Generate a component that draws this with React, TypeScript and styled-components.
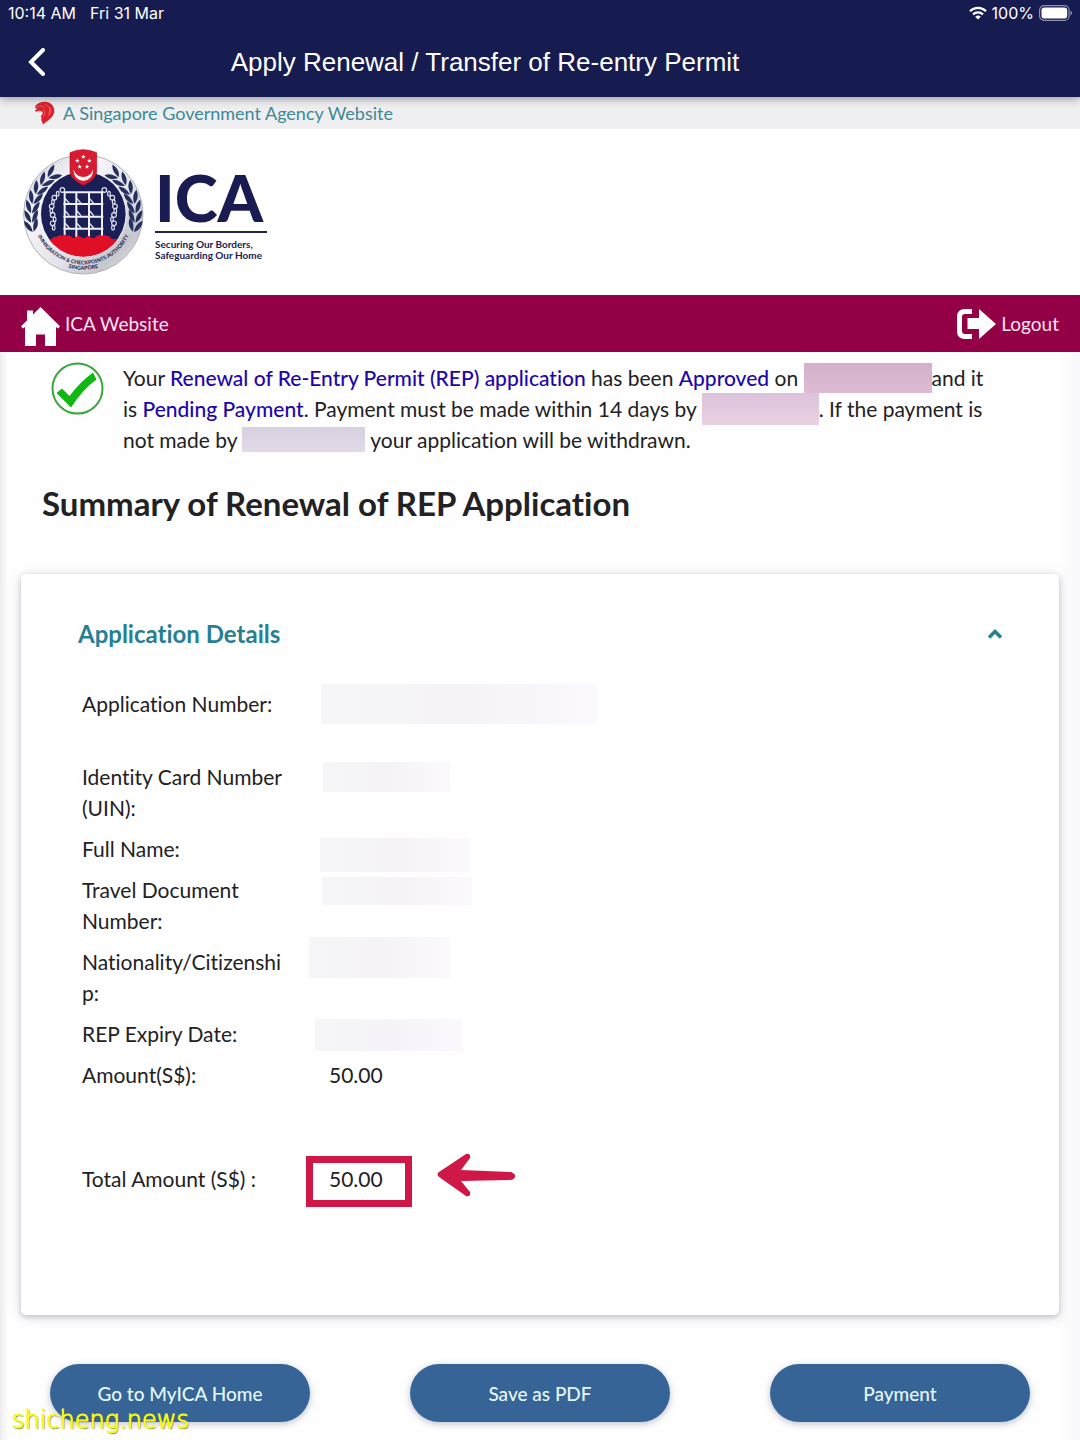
import React, { useState } from "react";
import styled, { createGlobalStyle } from "styled-components";

const sans = `Lato, "Open Sans", sans-serif`;

const GlobalStyle = createGlobalStyle`
  *, *::before, *::after { box-sizing: border-box; }
  body {
    margin: 0;
    background: #fff;
    color: #222124;
    font: 21px/31px ${sans};
    font-variant-ligatures: none;
  }
  h1, h2, h3, p, dl, dd { margin: 0; }
  a { color: inherit; text-decoration: none; }
  svg { display: block; flex: none; }
  button { font: inherit; border: 0; padding: 0; background: none; color: inherit; cursor: pointer; }
`;

const Page = styled.div`
  position: relative;
  min-height: 100vh;
  display: flex;
  flex-direction: column;
`;

const TopBar = styled.header`
  position: relative;
  background: #171c50;
  color: #fff;
  box-shadow: 0 2px 8px rgba(40, 50, 60, 0.45);
`;

const StatusBar = styled.div`
  display: flex;
  justify-content: space-between;
  padding: 0 8px;
  font: 16px/26px Inter, sans-serif;
`;

const StatusGroup = styled.div<{ $gap: number }>`
  display: flex;
  align-items: center;
  gap: ${(p) => p.$gap}px;
`;

const TitleBar = styled.div`
  display: flex;
  align-items: center;
  height: 71px;
  padding: 0 158px 0 24px;
`;

const BackButton = styled.button`
  display: grid;
  place-items: center;
  width: 24px;
  height: 40px;
`;

const Title = styled.h1`
  flex: 1;
  text-align: center;
  font: 400 26px/32px "Liberation Sans", Arial, sans-serif;
`;

const AgencyStrip = styled.div`
  display: flex;
  align-items: center;
  gap: 8px;
  height: 32px;
  padding: 0 34px;
  background: #efeef0;
  color: #3c8995;
  font-size: 18px;
`;

const Brand = styled.div`
  display: flex;
  align-items: center;
  gap: 10px;
  height: 166px;
  padding: 0 21px;
  color: #1a1b51;
`;

const BrandText = styled.div`
  min-width: 112px;
  padding-top: 4px;
`;

const BrandName = styled.div`
  padding-bottom: 5px;
  font-size: 65px;
  line-height: 58px;
  font-weight: 900;
  border-bottom: 2px solid #22264f;
`;

const Tagline = styled.p`
  padding-top: 6px;
  font-size: 10px;
  line-height: 11px;
  font-weight: 700;
`;

const NavBar = styled.nav`
  display: flex;
  justify-content: space-between;
  align-items: center;
  height: 57px;
  padding: 0 21px;
  background: #930046;
  color: #fbe3f2;
  font-size: 19px;
`;

const NavLink = styled.a`
  display: flex;
  align-items: center;
  gap: 5px;
`;

const Main = styled.main`
  flex: 1;
  padding: 10px 21px 18px;
  background:
    linear-gradient(90deg, #ededf0, rgba(255, 255, 255, 0) 8px),
    linear-gradient(270deg, #f9f8fb, rgba(255, 255, 255, 0) 20px),
    #fefefe;
`;

const Notice = styled.section`
  display: flex;
  align-items: flex-start;
  gap: 19px;
  padding: 0 64px 0 30px;
`;

const Key = styled.span`
  color: #1c05ad;
  font-weight: 500;
`;

const InlineMask = styled.span<{ $w: number; $h: number; $tone: string }>`
  display: inline-block;
  vertical-align: middle;
  width: ${(p) => p.$w}px;
  height: ${(p) => p.$h}px;
  margin: -7px 0 -1px;
  background: ${(p) => p.$tone};
`;

const Heading = styled.h2`
  padding: 27px 21px 0;
  font-size: 33px;
  line-height: 42px;
  font-weight: 700;
`;

const Card = styled.section`
  margin-top: 50px;
  min-height: 741px;
  padding: 44px 56px 60px 57px;
  border-radius: 5px;
  background: #fff;
  box-shadow: 0 2px 6px rgba(40, 40, 60, 0.28), 0 2px 18px rgba(60, 40, 80, 0.08);
`;

const CardHeader = styled.header`
  display: flex;
  justify-content: space-between;
  align-items: center;
  color: #267f95;
`;

const CardTitle = styled.h3`
  font-size: 24px;
  line-height: 31px;
  font-weight: 700;
`;

const Toggle = styled.button`
  display: grid;
  place-items: center;
  width: 16px;
  height: 31px;
`;

const Details = styled.dl`
  display: grid;
  gap: 10px;
  padding: 39px 4px 0;
`;

const DetailRow = styled.div<{ $tall?: boolean }>`
  display: grid;
  grid-template-columns: 206px 1fr;
  column-gap: 41px;
  min-height: ${(p) => (p.$tall ? 63 : 31)}px;
`;

const Label = styled.dt`
  overflow-wrap: anywhere;
`;

const Value = styled.dd`
  position: relative;
`;

const Mask = styled.span<{ $x: number; $y: number; $w: number; $h: number }>`
  position: absolute;
  left: ${(p) => p.$x}px;
  top: ${(p) => p.$y}px;
  width: ${(p) => p.$w}px;
  height: ${(p) => p.$h}px;
  background: linear-gradient(90deg, #f6f6f8, #f5f3f7 50%, #fbf9fd);
`;

const Highlight = styled.span`
  position: absolute;
  left: -23px;
  top: -7px;
  width: 106px;
  height: 51px;
  border: 7px solid #cf1848;
`;

const Arrow = styled.svg`
  position: absolute;
  left: 108px;
  top: -10px;
`;

const Total = styled(Details)`
  padding-top: 73px;
`;

const Actions = styled.div`
  display: grid;
  grid-template-columns: repeat(3, 1fr);
  justify-items: center;
  margin: 49px -21px 0;
`;

const ActionButton = styled.button`
  width: 72%;
  height: 58px;
  border-radius: 29px;
  background: #366497;
  color: #e4f8ff;
  font-size: 19px;
  font-weight: 500;
  box-shadow: 0 2px 7px rgba(50, 60, 110, 0.3);
`;

const Watermark = styled.div`
  position: absolute;
  left: 12px;
  bottom: 4px;
  color: #f8f81c;
  font: 200 24px/32px "DejaVu Sans", sans-serif;
  -webkit-text-stroke: 1px #f8f81c;
  text-shadow: 1px 1px 1px #55601f;
`;

function Wifi() {
  return (
    <svg width="18" height="14" viewBox="0 0 18 14" fill="none" stroke="#fff" strokeWidth="2.2">
      <path d="M1 5.2a11.4 11.4 0 0 1 16 0" />
      <path d="M4 8.4a7.2 7.2 0 0 1 10 0" />
      <path d="M9 13.6 6.2 10.8a4 4 0 0 1 5.6 0Z" fill="#fff" stroke="none" />
    </svg>
  );
}

function Battery() {
  return (
    <svg width="33" height="16" viewBox="0 0 33 16">
      <rect x=".6" y=".6" width="29.5" height="14.8" rx="4.5" fill="none" stroke="#8e91ad" strokeWidth="1.2" />
      <rect x="2.5" y="2.5" width="25.7" height="11" rx="2.8" fill="#fff" />
      <path d="M31.5 5.5v5c2-.8 2-4.2 0-5Z" fill="#8e91ad" />
    </svg>
  );
}

function Lion() {
  return (
    <svg width="21" height="24" viewBox="0 0 63 72">
      <path
        fill="#dc1f2a"
        d="M4 14C14 3 34-1 46 5c12 6 17 19 14 31-3 11-11 17-19 23-5 3-9 7-13 11-3-3-4-6-4-9-3-3-3-6-1-9l-3-7c5-3 7-8 5-13-5-2-9-3-12-2l-8 2-2-5 8-4-8-2 2-5Z"
      />
      <path
        fill="none"
        stroke="#f4989c"
        strokeWidth="1.5"
        d="M8 17c10-3 18-2 25 3M34 10c13 6 17 18 8 30M48 18c6 10 3 20-6 28M26 24c8 6 8 16 1 24"
      />
    </svg>
  );
}

const chain = [
  [157, 150], [143, 161], [133, 173], [129, 186], [125, 199], [124, 212],
  [128, 225], [134, 238], [128, 250], [131, 263],
];
const leaves = [
  [66, 260, -12], [64, 232, -2], [66, 204, 8], [73, 176, 18], [86, 149, 30],
  [104, 124, 41], [127, 103, 53],
];
const stars = [[220, 50], [202, 62], [238, 62], [209, 80], [231, 80]];

function Laurel() {
  return (
    <g fill="#25305f">
      {leaves.map(([x, y, a]) => (
        <g key={y} transform={`translate(${x} ${y}) rotate(${a})`}>
          <path d="M-1 16C-16 8-21-5-20-22-9-15-1-6-1 16Z" />
          <path d="M2 16C2-4 8-15 20-22 22-6 17 7 2 16Z" />
        </g>
      ))}
    </g>
  );
}

function Emblem() {
  return (
    <svg width="124" height="127" viewBox="33 27 372 381" role="img" aria-label="Immigration & Checkpoints Authority emblem">
      <defs>
        <linearGradient id="silver" x1="0" y1="0" x2="1" y2="1">
          <stop offset="0" stopColor="#c9c9d0" />
          <stop offset=".3" stopColor="#f7f7fa" />
          <stop offset=".6" stopColor="#e3e3e8" />
          <stop offset=".8" stopColor="#c6c6cd" />
          <stop offset="1" stopColor="#ececf0" />
        </linearGradient>
        <clipPath id="disc"><circle cx="220" cy="222" r="128" /></clipPath>
        <path id="arcOuter" d="M84 288A151 151 0 0 0 356 288" />
        <path id="arcInner" d="M120 356A167 167 0 0 0 320 356" />
      </defs>
      <circle cx="220" cy="223" r="179" fill="url(#silver)" stroke="#b3b3bb" strokeWidth="3" />
      <Laurel />
      <g transform="translate(440 0) scale(-1 1)"><Laurel /></g>
      <circle cx="220" cy="222" r="130" fill="#f3f3f7" />
      <circle cx="220" cy="222" r="127" fill="#1a1f55" />
      <g fill="none" stroke="#eef0f6" strokeWidth="6">
        <path d="M160 157H280M164 157V300M199 157V300M237 157V300M276 157V300M160 192H280M160 230H280M160 266H280" />
        <path strokeWidth="4" d="M166 176l12 14M201 176l12 14M239 176l12 14M166 213l12 14M201 213l12 14M239 213l12 14M166 250l12 14M201 250l12 14M239 250l12 14" />
      </g>
      <g fill="none" stroke="#dfe3f0" strokeWidth="3.5">
        {chain.map(([x, y], i) => (
          <g key={y}>
            <ellipse cx={x} cy={y} rx={i % 2 ? 4 : 7} ry="7" />
            <ellipse cx={440 - x} cy={y} rx={i % 2 ? 4 : 7} ry="7" />
          </g>
        ))}
      </g>
      <path
        clipPath="url(#disc)"
        fill="#e00f25"
        d="M85 299 125 298q5-10 14-7 8-8 16-3 9-8 17 0 8-4 13 3 6 8 12 0 8-5 16-1 8 9 16 1 7-7 14 1 8 7 14-1 9-10 18-4 9-5 16 1 9-2 13 9l60 1V360H85Z"
      />
      <path fill="#d91a30" stroke="#a80f25" strokeWidth="2" d="M180 38q38-18 80 0V92c0 22-18 32-40 44-22-12-40-22-40-44Z" />
      {stars.map(([x, y]) => (
        <path key={`${x}-${y}`} transform={`translate(${x} ${y})`} fill="#fff" d="M0-7 2-2 7-2 3 1 4 6 0 3-4 6-3 1-7-2-2-2Z" />
      ))}
      <path fill="#fff" d="M191 88c5 18 17 23 29 23s24-5 29-23c1 21-12 34-29 34s-30-13-29-34Z" />
      <g fill="#2b2f55" fontFamily="Lato, sans-serif" fontWeight="900" fontSize="16" textAnchor="middle">
        <text><textPath href="#arcOuter" startOffset="50%">IMMIGRATION &amp; CHECKPOINTS AUTHORITY</textPath></text>
        <text><textPath href="#arcInner" startOffset="50%">SINGAPORE</textPath></text>
      </g>
    </svg>
  );
}

function HomeIcon() {
  return (
    <svg width="39" height="45" viewBox="0 -6 39 45" fill="#fff">
      <path d="M19.5 0 39 19.3 37 21.5 35 20V39H24V27.5H15V39H4V20L2 21.5 0 19.3 6 13.5V3.5H12V7.5Z" />
    </svg>
  );
}

function LogoutIcon() {
  return (
    <svg width="39" height="30" viewBox="0 0 39 30">
      <path d="M15 2.5H8Q2.5 2.5 2.5 8V22Q2.5 27.5 8 27.5H15" fill="none" stroke="#fff" strokeWidth="5" />
      <path d="M10.5 9H22V0L39 15 22 30V20H10.5Z" fill="#fff" />
    </svg>
  );
}

function Approved() {
  return (
    <svg width="53" height="53" viewBox="0 0 53 53">
      <circle cx="26.5" cy="26.5" r="25" fill="#fff" stroke="#39a83c" strokeWidth="2" />
      <path d="M5.5 31 11 26.5 18.5 34Q29 20 42 10.5L45.5 17.5Q32 27 20 45.5Z" fill="#13b713" />
    </svg>
  );
}

type Detail = { label: string; mask?: [number, number, number, number]; value?: string; tall?: boolean };

const details: Detail[] = [
  { label: "Application Number:", mask: [-8, -4, 276, 40], tall: true },
  { label: "Identity Card Number (UIN):", mask: [-6, 1, 128, 30] },
  { label: "Full Name:", mask: [-9, 5, 150, 34] },
  { label: "Travel Document Number:", mask: [-7, 3, 150, 28] },
  { label: "Nationality/Citizenship:", mask: [-20, -9, 141, 41] },
  { label: "REP Expiry Date:", mask: [-14, 1, 147, 32] },
  { label: "Amount(S$):", value: "50.00" },
];

export default function App() {
  const [open, setOpen] = useState(true);
  return (
    <>
      <GlobalStyle />
      <Page>
        <TopBar>
          <StatusBar>
            <StatusGroup $gap={14}><span>10:14 AM</span><span>Fri 31 Mar</span></StatusGroup>
            <StatusGroup $gap={5}><Wifi /><span>100%</span><Battery /></StatusGroup>
          </StatusBar>
          <TitleBar>
            <BackButton aria-label="Back">
              <svg width="18" height="28" viewBox="0 0 18 28" fill="none" stroke="#fff" strokeWidth="4">
                <path d="M16 2 4 14 16 26" strokeLinecap="round" />
              </svg>
            </BackButton>
            <Title>Apply Renewal / Transfer of Re-entry Permit</Title>
          </TitleBar>
        </TopBar>
        <AgencyStrip>
          <Lion />
          <a href="#agency">A Singapore Government Agency Website</a>
        </AgencyStrip>
        <Brand>
          <Emblem />
          <BrandText>
            <BrandName>ICA</BrandName>
            <Tagline>Securing Our Borders,<br />Safeguarding Our Home</Tagline>
          </BrandText>
        </Brand>
        <NavBar>
          <NavLink href="#home"><HomeIcon />ICA Website</NavLink>
          <NavLink href="#logout"><LogoutIcon />Logout</NavLink>
        </NavBar>
        <Main>
          <Notice>
            <Approved />
            <p>
              Your <Key>Renewal of Re-Entry Permit (REP) application</Key> has been <Key>Approved</Key> on{" "}
              <InlineMask $w={128} $h={30} $tone="linear-gradient(#d3b0cb, #dfbcd4)" />
              and it is <Key>Pending Payment</Key>. Payment must be made within 14 days by{" "}
              <InlineMask $w={117} $h={32} $tone="linear-gradient(#dcc2dc, #ead2e2)" />
              . If the payment is not made by{" "}
              <InlineMask $w={123} $h={25} $tone="linear-gradient(#d6d0df, #e3dae8)" /> your application will be
              withdrawn.
            </p>
          </Notice>
          <Heading>Summary of Renewal of REP Application</Heading>
          <Card>
            <CardHeader>
              <CardTitle>Application Details</CardTitle>
              <Toggle aria-label="Toggle application details" aria-expanded={open} onClick={() => setOpen(!open)}>
                <svg width="16" height="10" viewBox="0 0 16 10" fill="none" stroke="#267f95" strokeWidth="3.5">
                  <path d={open ? "M2 8.5 8 2.5 14 8.5" : "M2 1.5 8 7.5 14 1.5"} />
                </svg>
              </Toggle>
            </CardHeader>
            {open && (
              <>
                <Details>
                  {details.map(({ label, mask, value, tall }) => (
                    <DetailRow key={label} $tall={tall}>
                      <Label>{label}</Label>
                      <Value>
                        {value}
                        {mask && <Mask $x={mask[0]} $y={mask[1]} $w={mask[2]} $h={mask[3]} />}
                      </Value>
                    </DetailRow>
                  ))}
                </Details>
                <Total>
                  <DetailRow>
                    <Label>Total Amount (S$) :</Label>
                    <Value>
                      50.00
                      <Highlight />
                      <Arrow width="79" height="44" viewBox="0 0 79 44">
                        <path
                          fill="#cf1848"
                          d="M2 19 29 1q5-1 4 4L24 17 74 19q5 2 4 5-1 3-5 3L24 28 33 39q1 5-4 4L2 24q-3-3 0-5Z"
                        />
                      </Arrow>
                    </Value>
                  </DetailRow>
                </Total>
              </>
            )}
          </Card>
          <Actions>
            <ActionButton>Go to MyICA Home</ActionButton>
            <ActionButton>Save as PDF</ActionButton>
            <ActionButton>Payment</ActionButton>
          </Actions>
        </Main>
        <Watermark>shicheng.news</Watermark>
      </Page>
    </>
  );
}
